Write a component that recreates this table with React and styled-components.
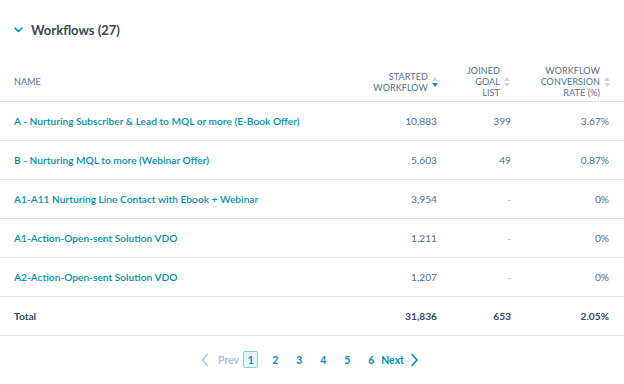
import React from "react";
import styled, { createGlobalStyle } from "styled-components";

const GlobalStyle = createGlobalStyle`
  body {
    margin: 0;
    background: #ffffff;
    font-family: Lato, "Open Sans", sans-serif;
    color: #33475b;
  }
`;

const Page = styled.div`
  width: 624px;
  height: 384px;
  overflow: hidden;
`;

const SectionHeader = styled.div`
  display: flex;
  align-items: center;
  gap: 8px;
  padding: 22px 0 0 14px;
  height: 16px;
`;

const SectionTitle = styled.div`
  font-size: 13px;
  font-weight: 700;
  color: #33475b;
`;

const Table = styled.div`
  margin-top: 24px;
  display: grid;
  grid-template-columns: 1fr 92px 74px 104px;
`;

const HeadCell = styled.div`
  display: flex;
  align-items: center;
  justify-content: ${(p) => (p.$left ? "flex-start" : "flex-end")};
  gap: 4px;
  height: 39px;
  padding: 0 ${(p) => p.$pr || 9}px 0 ${(p) => (p.$left ? 14 : 0)}px;
  border-bottom: 1px solid #dfe3eb;
  font-size: 9px;
  letter-spacing: 0.1px;
  line-height: 11px;
  text-transform: uppercase;
  text-align: right;
  color: #516f90;
`;

const Cell = styled.div`
  display: flex;
  align-items: center;
  justify-content: ${(p) => (p.$left ? "flex-start" : "flex-end")};
  height: 38px;
  padding: 0 ${(p) => p.$pr || 9}px 0 ${(p) => (p.$left ? 14 : 0)}px;
  border-bottom: 1px solid #dfe3eb;
  font-size: 10.2px;
  font-weight: ${(p) => (p.$bold ? 700 : 400)};
  color: ${(p) => (p.$link ? "#0091ae" : p.$muted ? "#99afc4" : p.$bold ? "#33475b" : "#516f90")};
  ${(p) => p.$link && "font-weight: 600;"}
  white-space: nowrap;
`;

const Pager = styled.div`
  display: flex;
  align-items: center;
  justify-content: center;
  margin-top: 15px;
  padding-right: 4px;
  font-size: 10.5px;
  font-weight: 700;
  color: #0091ae;
`;

const PageLink = styled.div`
  width: ${(p) => (p.$active ? 13 : 24)}px;
  height: 15px;
  display: flex;
  align-items: center;
  justify-content: center;
  border: ${(p) => (p.$active ? "1px solid #7fd1de" : "none")};
  background: ${(p) => (p.$active ? "#e5f5f8" : "transparent")};
  border-radius: 2px;
  margin: ${(p) => (p.$active ? "0 5px 0 4px" : "0")};
`;

const PagerText = styled.div`
  color: ${(p) => (p.$disabled ? "#b0c1d4" : "#0091ae")};
  margin: 0 ${(p) => p.$mr || 0}px 0 ${(p) => p.$ml || 0}px;
`;

const SortIcon = ({ active }) => (
  <svg width="6" height="12" viewBox="0 0 6 12">
    <path d="M0 5 L3 1 L6 5 Z" fill="#cbd6e2" />
    <path d="M0 7 L3 11 L6 7 Z" fill={active ? "#0091ae" : "#cbd6e2"} />
  </svg>
);

const rows = [
  ["A - Nurturing Subscriber & Lead to MQL or more (E-Book Offer)", "10,883", "399", "3.67%"],
  ["B - Nurturing MQL to more (Webinar Offer)", "5,603", "49", "0.87%"],
  ["A1-A11 Nurturing Line Contact with Ebook + Webinar", "3,954", "-", "0%"],
  ["A1-Action-Open-sent Solution VDO", "1,211", "-", "0%"],
  ["A2-Action-Open-sent Solution VDO", "1,207", "-", "0%"],
];

export default function App() {
  return (
    <Page>
      <GlobalStyle />
      <SectionHeader>
        <svg width="9" height="6" viewBox="0 0 9 6">
          <path d="M1 1 L4.5 4.5 L8 1" fill="none" stroke="#0091ae" strokeWidth="1.6" strokeLinecap="round" strokeLinejoin="round" />
        </svg>
        <SectionTitle>Workflows (27)</SectionTitle>
      </SectionHeader>
      <Table>
        <HeadCell $left>Name</HeadCell>
        <HeadCell $pr={8}>
          <span>Started<br />Workflow</span>
          <SortIcon active />
        </HeadCell>
        <HeadCell $pr={10}>
          <span>Joined<br />Goal<br />List</span>
          <SortIcon />
        </HeadCell>
        <HeadCell $pr={14}>
          <span>Workflow<br />Conversion<br />Rate (%)</span>
          <SortIcon />
        </HeadCell>
        {rows.map((r) => (
          <React.Fragment key={r[0]}>
            <Cell $left $link>{r[0]}</Cell>
            <Cell>{r[1]}</Cell>
            <Cell $muted={r[2] === "-"}>{r[2]}</Cell>
            <Cell $pr={15}>{r[3]}</Cell>
          </React.Fragment>
        ))}
        <Cell $left $bold>Total</Cell>
        <Cell $bold>31,836</Cell>
        <Cell $bold>653</Cell>
        <Cell $bold $pr={15}>2.05%</Cell>
      </Table>
      <Pager>
        <svg width="10" height="14" viewBox="0 0 10 14">
          <path d="M7.5 1.5 L2.5 7 L7.5 12.5" fill="none" stroke="#b0c1d4" strokeWidth="1.6" strokeLinecap="round" strokeLinejoin="round" />
        </svg>
        <PagerText $disabled $ml={8}>Prev</PagerText>
        <PageLink $active>1</PageLink>
        <PageLink>2</PageLink>
        <PageLink>3</PageLink>
        <PageLink>4</PageLink>
        <PageLink>5</PageLink>
        <PageLink>6</PageLink>
        <PagerText $ml={-2} $mr={4}>Next</PagerText>
        <svg width="12" height="14" viewBox="0 0 12 14">
          <path d="M4 1.5 L9 7 L4 12.5" fill="none" stroke="#0091ae" strokeWidth="1.6" strokeLinecap="round" strokeLinejoin="round" />
        </svg>
      </Pager>
    </Page>
  );
}
